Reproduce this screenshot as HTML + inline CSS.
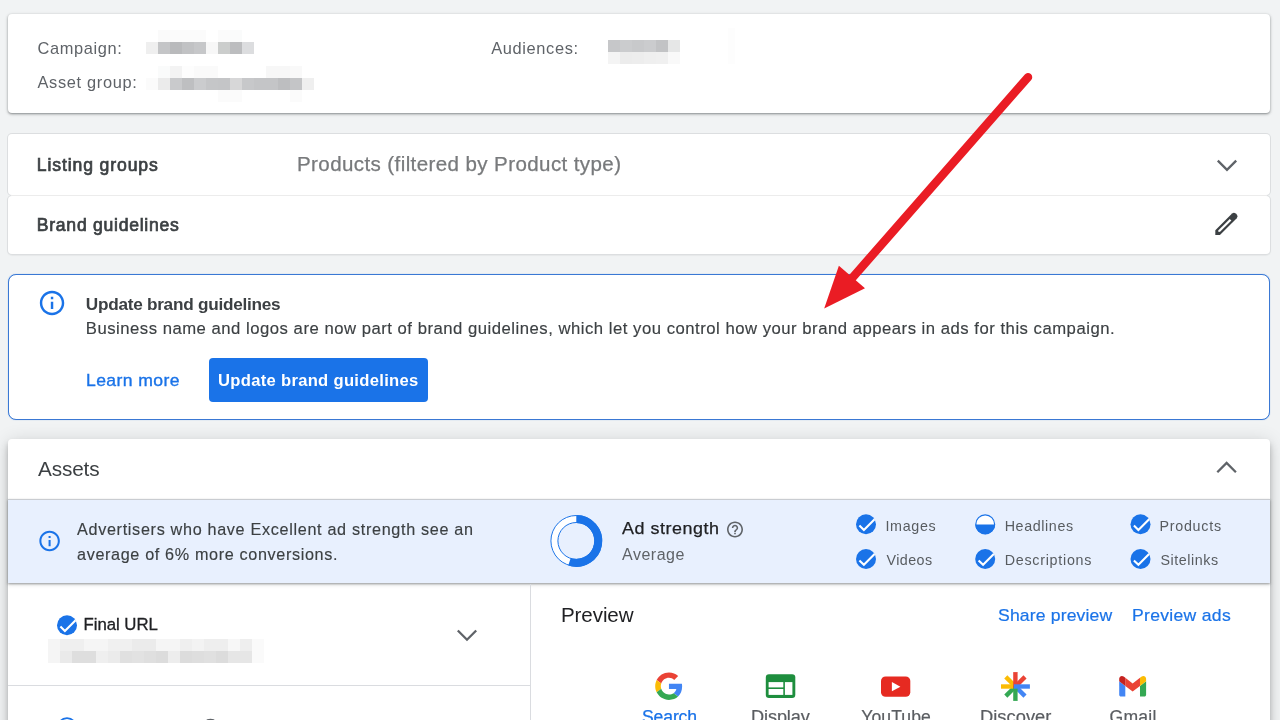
<!DOCTYPE html>
<html lang="en">
<head>
<meta charset="utf-8">
<title>Asset group</title>
<style>
*{box-sizing:border-box;margin:0;padding:0}
html,body{width:1280px;height:720px;overflow:hidden;background:#f1f3f4;font-family:"Liberation Sans",sans-serif;color:#3c4043}
.abs{position:absolute}
.t{position:absolute;white-space:nowrap;line-height:1}
.card{position:absolute;background:#fff}
#c1{left:8px;top:14px;width:1262px;height:99px;border-radius:4px;box-shadow:0 1px 2px rgba(60,64,67,.45),0 1px 3px 1px rgba(60,64,67,.15)}
#c2{left:8px;top:134px;width:1262px;height:61px;box-shadow:0 0 0 1px #dcdee0;border-radius:4px}
#c3{left:8px;top:196px;width:1262px;height:58px;box-shadow:0 0 0 1px #dcdee0,0 1px 1px 1px rgba(60,64,67,.06);border-radius:4px}
#info{left:8px;top:274px;width:1262px;height:146px;border:1px solid #3a78d4;border-radius:8px;box-shadow:0 0 1px rgba(26,115,232,.55)}
#c4{left:8px;top:439px;width:1262px;height:300px;border-radius:4px 4px 0 0;box-shadow:0 3px 5px -1px rgba(0,0,0,.2),0 6px 10px 0 rgba(0,0,0,.14),0 1px 18px 0 rgba(0,0,0,.12)}
#strip{left:8px;top:499px;width:1262px;height:84px;background:#e8f0fe;border-top:1px solid #c9ccd1;box-shadow:0 1px 2px rgba(60,64,67,.45),0 2px 4px rgba(60,64,67,.15)}
#btn{left:209px;top:358px;width:219px;height:44px;background:#1a73e8;border-radius:4px}
svg{position:absolute;left:0;top:0;overflow:visible}
</style>
</head>
<body>
<div class="card" id="c1"></div>
<div class="card" id="c2"></div>
<div class="card" id="c3"></div>
<div class="abs" style="left:11px;top:195px;width:1256px;height:1px;background:#ececec"></div>
<div class="card" id="info"></div>
<div class="abs" id="btn"></div>
<div class="card" id="c4"></div>
<div class="abs" id="strip"></div>
<div class="abs" style="left:530px;top:584px;width:1px;height:140px;background:#dadce0"></div>
<div class="abs" style="left:8px;top:685px;width:522px;height:1px;background:#dadce0"></div>

<div id="tx" style="position:absolute;left:0;top:0;width:1280px;height:720px;will-change:transform"><div class="t" style="left:37.50px;top:39.76px;font-size:16.4px;color:#5f6368;letter-spacing:0.630px">Campaign:</div>
<div class="t" style="left:37.50px;top:73.51px;font-size:16.4px;color:#5f6368;letter-spacing:0.662px">Asset group:</div>
<div class="t" style="left:491.25px;top:39.76px;font-size:16.4px;color:#5f6368;letter-spacing:0.634px">Audiences:</div>
<div class="t" style="left:36.80px;top:156.81px;font-size:17.6px;color:#3c4043;letter-spacing:0.881px;-webkit-text-stroke:0.7px #3c4043">Listing groups</div>
<div class="t" style="left:297.24px;top:154.81px;font-size:19.4px;color:#787a7c;letter-spacing:0.369px;-webkit-text-stroke:0.25px #787a7c;transform:scaleX(1.06);transform-origin:0 0">Products (filtered by Product type)</div>
<div class="t" style="left:36.80px;top:216.81px;font-size:17.6px;color:#3c4043;letter-spacing:0.729px;-webkit-text-stroke:0.7px #3c4043">Brand guidelines</div>
<div class="t" style="left:85.75px;top:296.00px;font-size:17.2px;color:#3c4043;letter-spacing:-0.261px;font-weight:700">Update brand guidelines</div>
<div class="t" style="left:85.75px;top:321.11px;font-size:16.7px;color:#3c4043;letter-spacing:0.505px;-webkit-text-stroke:0.15px #3c4043">Business name and logos are now part of brand guidelines, which let you control how your brand appears in ads for this campaign.</div>
<div class="t" style="left:85.69px;top:372.51px;font-size:16.6px;color:#1a73e8;letter-spacing:0.378px;-webkit-text-stroke:0.35px #1a73e8;transform:scaleX(1.06);transform-origin:0 0">Learn more</div>
<div class="t" style="left:218.00px;top:373.26px;font-size:16.6px;color:#ffffff;letter-spacing:0.301px;font-weight:700">Update brand guidelines</div>
<div class="t" style="left:37.50px;top:459.51px;font-size:19.8px;color:#3c4043;letter-spacing:-0.133px;transform:scaleX(1.05);transform-origin:0 0">Assets</div>
<div class="t" style="left:77.00px;top:520.51px;font-size:16.2px;color:#3c4043;letter-spacing:0.677px;-webkit-text-stroke:0.15px #3c4043">Advertisers who have Excellent ad strength see an</div>
<div class="t" style="left:77.00px;top:545.51px;font-size:16.2px;color:#3c4043;letter-spacing:0.645px;-webkit-text-stroke:0.15px #3c4043">average of 6% more conversions.</div>
<div class="t" style="left:622.00px;top:521.26px;font-size:16.6px;color:#202124;letter-spacing:0.495px;-webkit-text-stroke:0.25px #202124;transform:scaleX(1.08);transform-origin:0 0">Ad strength</div>
<div class="t" style="left:622.00px;top:546.51px;font-size:16px;color:#5f6368;letter-spacing:0.516px">Average</div>
<div class="t" style="left:885.40px;top:519.01px;font-size:14.3px;color:#585c60;letter-spacing:0.693px">Images</div>
<div class="t" style="left:886.40px;top:552.51px;font-size:14.3px;color:#585c60;letter-spacing:0.458px">Videos</div>
<div class="t" style="left:1004.70px;top:519.01px;font-size:14.3px;color:#585c60;letter-spacing:0.608px">Headlines</div>
<div class="t" style="left:1004.70px;top:552.51px;font-size:14.3px;color:#585c60;letter-spacing:0.735px">Descriptions</div>
<div class="t" style="left:1159.40px;top:519.01px;font-size:14.3px;color:#585c60;letter-spacing:0.747px">Products</div>
<div class="t" style="left:1160.40px;top:552.51px;font-size:14.3px;color:#585c60;letter-spacing:0.564px">Sitelinks</div>
<div class="t" style="left:83.50px;top:617.11px;font-size:16.8px;color:#202124;letter-spacing:-0.034px;-webkit-text-stroke:0.3px #202124">Final URL</div>
<div class="t" style="left:560.96px;top:606.31px;font-size:19.8px;color:#202124;letter-spacing:-0.100px;transform:scaleX(1.04);transform-origin:0 0">Preview</div>
<div class="t" style="left:997.60px;top:607.91px;font-size:16.6px;color:#1a73e8;letter-spacing:0.141px;-webkit-text-stroke:0.2px #1a73e8;transform:scaleX(1.06);transform-origin:0 0">Share preview</div>
<div class="t" style="left:1132.44px;top:607.91px;font-size:16.6px;color:#1a73e8;letter-spacing:0.271px;-webkit-text-stroke:0.2px #1a73e8;transform:scaleX(1.06);transform-origin:0 0">Preview ads</div>
<div class="t" style="left:642.00px;top:708.61px;font-size:17.6px;color:#1a73e8;letter-spacing:-0.142px;-webkit-text-stroke:0.25px #1a73e8">Search</div>
<div class="t" style="left:750.97px;top:708.61px;font-size:17.6px;color:#5a5d61;letter-spacing:-0.096px;-webkit-text-stroke:0.2px #5a5d61;transform:scaleX(1.03);transform-origin:0 0">Display</div>
<div class="t" style="left:861.25px;top:708.61px;font-size:17.6px;color:#5a5d61;letter-spacing:0.066px;-webkit-text-stroke:0.2px #5a5d61">YouTube</div>
<div class="t" style="left:979.71px;top:708.61px;font-size:17.6px;color:#5a5d61;letter-spacing:0.031px;-webkit-text-stroke:0.2px #5a5d61;transform:scaleX(1.04);transform-origin:0 0">Discover</div>
<div class="t" style="left:1109.50px;top:708.61px;font-size:17.6px;color:#5a5d61;letter-spacing:0.241px;-webkit-text-stroke:0.2px #5a5d61">Gmail</div></div>

<svg width="1280" height="720" viewBox="0 0 1280 720">
<!-- blurred (pixelated) values -->
<g shape-rendering="crispEdges">
<rect x="158" y="30" width="12" height="12" fill="#fafafa"/>
<rect x="170" y="30" width="12" height="12" fill="#fbfbfb"/>
<rect x="182" y="30" width="12" height="12" fill="#fbfbfb"/>
<rect x="194" y="30" width="12" height="12" fill="#fbfbfb"/>
<rect x="218" y="30" width="12" height="12" fill="#fbfbfb"/>
<rect x="230" y="30" width="12" height="12" fill="#fafbfb"/>
<rect x="146" y="42" width="12" height="12" fill="#efefef"/>
<rect x="158" y="42" width="12" height="12" fill="#c4c5c7"/>
<rect x="170" y="42" width="12" height="12" fill="#b9babc"/>
<rect x="182" y="42" width="12" height="12" fill="#c1c2c4"/>
<rect x="194" y="42" width="12" height="12" fill="#c6c7c9"/>
<rect x="206" y="42" width="12" height="12" fill="#f7f7f7"/>
<rect x="218" y="42" width="12" height="12" fill="#cbcdcc"/>
<rect x="230" y="42" width="12" height="12" fill="#bcbdbf"/>
<rect x="242" y="42" width="12" height="12" fill="#dcdddf"/>
<rect x="158" y="66" width="12" height="12" fill="#fafbfb"/>
<rect x="170" y="66" width="12" height="12" fill="#f3f3f3"/>
<rect x="182" y="66" width="12" height="12" fill="#fdfdfd"/>
<rect x="194" y="66" width="12" height="12" fill="#fafafa"/>
<rect x="206" y="66" width="12" height="12" fill="#fafafa"/>
<rect x="266" y="66" width="12" height="12" fill="#f7f7f7"/>
<rect x="278" y="66" width="12" height="12" fill="#f7f7f7"/>
<rect x="290" y="66" width="12" height="12" fill="#f9f9f9"/>
<rect x="146" y="78" width="12" height="12" fill="#fbfbfb"/>
<rect x="158" y="78" width="12" height="12" fill="#ebebeb"/>
<rect x="170" y="78" width="12" height="12" fill="#c9cacc"/>
<rect x="182" y="78" width="12" height="12" fill="#bebfc1"/>
<rect x="194" y="78" width="12" height="12" fill="#cbccce"/>
<rect x="206" y="78" width="12" height="12" fill="#c5c6c8"/>
<rect x="218" y="78" width="12" height="12" fill="#c4c5c7"/>
<rect x="230" y="78" width="12" height="12" fill="#d7d7d8"/>
<rect x="242" y="78" width="12" height="12" fill="#c7c8ca"/>
<rect x="254" y="78" width="12" height="12" fill="#c4c5c7"/>
<rect x="266" y="78" width="12" height="12" fill="#c4c5c7"/>
<rect x="278" y="78" width="12" height="12" fill="#bdbec0"/>
<rect x="290" y="78" width="12" height="12" fill="#c4c5c7"/>
<rect x="302" y="78" width="12" height="12" fill="#efefef"/>
<rect x="218" y="90" width="12" height="12" fill="#fbfbfb"/>
<rect x="230" y="90" width="12" height="12" fill="#fbfbfb"/>
<rect x="290" y="90" width="12" height="12" fill="#fbfbfb"/>
<rect x="608" y="40" width="12" height="12" fill="#c6c7c9"/>
<rect x="620" y="40" width="12" height="12" fill="#cbccce"/>
<rect x="632" y="40" width="12" height="12" fill="#c8c9cb"/>
<rect x="644" y="40" width="12" height="12" fill="#cbccce"/>
<rect x="656" y="40" width="12" height="12" fill="#c2c3c5"/>
<rect x="668" y="40" width="12" height="12" fill="#e6e7e7"/>
<rect x="608" y="52" width="12" height="12" fill="#f4f4f4"/>
<rect x="620" y="52" width="12" height="12" fill="#ececec"/>
<rect x="632" y="52" width="12" height="12" fill="#ededed"/>
<rect x="644" y="52" width="12" height="12" fill="#efefef"/>
<rect x="656" y="52" width="12" height="12" fill="#f0f0f0"/>
<rect x="668" y="52" width="12" height="12" fill="#f9f9f9"/>
<rect x="48" y="639" width="12" height="12" fill="#f5f5f5"/>
<rect x="60" y="639" width="12" height="12" fill="#efefef"/>
<rect x="72" y="639" width="12" height="12" fill="#efefef"/>
<rect x="84" y="639" width="12" height="12" fill="#f5f5f5"/>
<rect x="96" y="639" width="12" height="12" fill="#f5f5f5"/>
<rect x="108" y="639" width="12" height="12" fill="#f0f0f0"/>
<rect x="120" y="639" width="12" height="12" fill="#f0f0f0"/>
<rect x="132" y="639" width="12" height="12" fill="#ebebeb"/>
<rect x="144" y="639" width="12" height="12" fill="#ebebeb"/>
<rect x="156" y="639" width="12" height="12" fill="#f5f5f5"/>
<rect x="168" y="639" width="12" height="12" fill="#f5f5f5"/>
<rect x="180" y="639" width="12" height="12" fill="#efefef"/>
<rect x="192" y="639" width="12" height="12" fill="#f3f3f3"/>
<rect x="204" y="639" width="12" height="12" fill="#eeeeee"/>
<rect x="216" y="639" width="12" height="12" fill="#eeeeee"/>
<rect x="228" y="639" width="12" height="12" fill="#f7f7f7"/>
<rect x="240" y="639" width="12" height="12" fill="#eeeeee"/>
<rect x="252" y="639" width="12" height="12" fill="#fafafa"/>
<rect x="48" y="651" width="12" height="12" fill="#f5f5f5"/>
<rect x="60" y="651" width="12" height="12" fill="#eaeaea"/>
<rect x="72" y="651" width="12" height="12" fill="#dedede"/>
<rect x="84" y="651" width="12" height="12" fill="#dedede"/>
<rect x="96" y="651" width="12" height="12" fill="#efefef"/>
<rect x="108" y="651" width="12" height="12" fill="#ebebeb"/>
<rect x="120" y="651" width="12" height="12" fill="#e0e0e0"/>
<rect x="132" y="651" width="12" height="12" fill="#e2e2e2"/>
<rect x="144" y="651" width="12" height="12" fill="#dfdfdf"/>
<rect x="156" y="651" width="12" height="12" fill="#dcdcdc"/>
<rect x="168" y="651" width="12" height="12" fill="#ededed"/>
<rect x="180" y="651" width="12" height="12" fill="#dcdcdc"/>
<rect x="192" y="651" width="12" height="12" fill="#dedede"/>
<rect x="204" y="651" width="12" height="12" fill="#e0e0e0"/>
<rect x="216" y="651" width="12" height="12" fill="#dcdcdc"/>
<rect x="228" y="651" width="12" height="12" fill="#e6e6e6"/>
<rect x="240" y="651" width="12" height="12" fill="#e6e6e6"/>
<rect x="252" y="651" width="12" height="12" fill="#fafafa"/>
</g>

<rect x="728" y="28" width="7" height="36" fill="#fdfdfd"/>
<!-- chevrons -->
<g fill="none" stroke="#5f6368" stroke-width="2.3">
<path d="M1217.8 160.6 L1227 169.8 L1236.2 160.6"/>
<path d="M1217.3 472.2 L1226.6 462.9 L1235.9 472.2"/>
<path d="M457.8 630.5 L467 639.7 L476.2 630.5"/>
</g>

<!-- pencil -->
<g transform="translate(1215.3 235) rotate(-45)">
<path d="M0 0 L3.3 -3.3 L27 -3.3 A2.6 2.6 0 0 1 29.6 -0.7 L29.6 0.7 A2.6 2.6 0 0 1 27 3.3 L3.3 3.3 Z" fill="#3c4043"/>
<path d="M4.4 0 L5.6 -1.15 L21.6 -1.15 L21.6 1.15 L5.6 1.15 Z" fill="#fff"/>
</g>

<!-- info icons -->
<g fill="#1a73e8">
<g transform="translate(37.4 288.3) scale(1.22)"><path d="M11 7h2v2h-2zm0 4h2v6h-2zm1-9C6.48 2 2 6.480 2 12s4.480 10 10 10 10-4.480 10-10S17.520 2 12 2zm0 18c-4.410 0-8-3.590-8-8s3.590-8 8-8 8 3.590 8 8-3.590 8-8 8z"/></g>
<g transform="translate(37.3 528.7) scale(1.025)"><path d="M11 7h2v2h-2zm0 4h2v6h-2zm1-9C6.48 2 2 6.480 2 12s4.480 10 10 10 10-4.480 10-10S17.520 2 12 2zm0 18c-4.410 0-8-3.590-8-8s3.590-8 8-8 8 3.590 8 8-3.590 8-8 8z"/></g>
</g>

<!-- help icon -->
<g transform="translate(725.4 519.9) scale(0.8)" fill="#5f6368"><path d="M11 18h2v-2h-2v2zm1-16C6.48 2 2 6.480 2 12s4.480 10 10 10 10-4.480 10-10S17.520 2 12 2zm0 18c-4.410 0-8-3.590-8-8s3.590-8 8-8 8 3.590 8 8-3.590 8-8 8zm0-14c-2.210 0-4 1.790-4 4h2c0-1.100.9-2 2-2s2 .9 2 2c0 2-3 1.750-3 5h2c0-2.250 3-2.500 3-5 0-2.210-1.790-4-4-4z"/></g>

<!-- donut -->
<g transform="translate(576.3 540.9)" fill="none">
<circle r="22" stroke="#fff" stroke-width="7.5"/>
<circle r="25.4" stroke="#1a73e8" stroke-width="1"/>
<circle r="18.4" stroke="#1a73e8" stroke-width="1"/>
<path d="M0 -22 A22 22 0 1 1 -6.8 20.92" stroke="#1a73e8" stroke-width="8"/>
</g>

<!-- check circles -->
<defs>
<g id="ck"><circle r="10" fill="#1a73e8"/><path d="M-6.6 1.4 L-2.1 5.8 L8.6 -4.9" fill="none" stroke="#fff" stroke-width="2.1"/></g>
</defs>
<use href="#ck" x="866" y="524.2"/>
<use href="#ck" x="866" y="559"/>
<use href="#ck" x="985.2" y="559"/>
<use href="#ck" x="1140.5" y="524.2"/>
<use href="#ck" x="1140.5" y="559"/>
<use href="#ck" x="67" y="625.2"/>
<!-- half circle (Headlines) -->
<g transform="translate(985.2 524.2)"><circle r="9.4" fill="#fff" stroke="#1a73e8" stroke-width="1.2"/><path d="M-10 0.3 A10 10 0 0 0 10 0.3 Z" fill="#1a73e8"/></g>
<!-- next row peeking -->
<circle cx="210.5" cy="727.2" r="7.6" fill="none" stroke="#5f6368" stroke-width="1.5"/>
<circle cx="67" cy="727.5" r="9.4" fill="none" stroke="#1a73e8" stroke-width="1.6"/>

<!-- Google G -->
<g transform="translate(655.2 672.4) scale(0.573)">
<path fill="#EA4335" d="M24 9.5c3.540 0 6.710 1.220 9.210 3.600l6.850-6.850C35.900 2.380 30.470 0 24 0 14.620 0 6.510 5.380 2.560 13.220l7.980 6.190C12.430 13.720 17.740 9.500 24 9.500z"/>
<path fill="#4285F4" d="M46.980 24.550c0-1.570-.150-3.090-.380-4.550H24v9.020h12.940c-.580 2.960-2.260 5.480-4.780 7.180l7.730 6c4.510-4.180 7.090-10.360 7.090-17.650z"/>
<path fill="#FBBC05" d="M10.530 28.590c-.480-1.450-.760-2.990-.760-4.590s.270-3.140.760-4.590l-7.980-6.190C.920 16.460 0 20.120 0 24c0 3.880.920 7.540 2.560 10.780l7.970-6.190z"/>
<path fill="#34A853" d="M24 48c6.480 0 11.930-2.130 15.890-5.810l-7.730-6c-2.150 1.450-4.920 2.300-8.160 2.300-6.260 0-11.570-4.220-13.470-9.910l-7.980 6.190C6.510 42.620 14.620 48 24 48z"/>
</g>

<!-- Display icon -->
<rect x="765.8" y="674.3" width="29.5" height="23.7" rx="3.2" fill="#1e8e3e"/>
<rect x="768.6" y="682.1" width="14.7" height="5.3" fill="#fff"/>
<rect x="768.6" y="689" width="14.7" height="5.9" fill="#fff"/>
<rect x="784.9" y="682.1" width="7.5" height="12.8" fill="#fff"/>

<!-- YouTube icon -->
<rect x="881" y="676.5" width="29.3" height="20.3" rx="4.6" fill="#e62a21"/>
<path d="M891.9 682.1 L900.4 686.65 L891.9 691.2 Z" fill="#fff"/>

<!-- Discover icon -->
<g transform="translate(1015.4 686.5)" stroke-width="4.4" fill="none">
<path d="M0 0 L-9.6 -9.6" stroke="#fbbc04"/>
<path d="M0 0 L9.6 -9.6" stroke="#ea4335"/>
<path d="M0 0 L-9.6 9.6" stroke="#34a853"/>
<path d="M0 0 L9.6 9.6" stroke="#4285f4"/>
<path d="M1 0 H-14.4" stroke="#fbbc04"/>
<path d="M0 -1 V14.4" stroke="#34a853"/>
<path d="M0 1.5 V-14.4" stroke="#ea4335"/>
<path d="M-1.5 0 H14.5" stroke="#4285f4"/>
</g>

<!-- Gmail icon -->
<g transform="translate(1119.2 675.9) scale(0.3057 0.3121) translate(-52 -42)">
<path fill="#4285f4" d="M58 108h14V74L52 59v43c0 3.320 2.690 6 6 6"/>
<path fill="#34a853" d="M120 108h14c3.320 0 6-2.690 6-6V59l-20 15"/>
<path fill="#fbbc04" d="M120 48v26l20-15v-8c0-7.420-8.470-11.650-14.400-7.200"/>
<path fill="#ea4335" d="M72 74V48l24 18 24-18v26L96 92"/>
<path fill="#c5221f" d="M52 51v8l20 15V48l-5.600-4.200c-5.940-4.450-14.400-.220-14.400 7.200"/>
</g>

<!-- red annotation arrow -->
<g>
<line x1="1028" y1="77.2" x2="850" y2="280.5" stroke="#ea1c24" stroke-width="8.5" stroke-linecap="round"/>
<path d="M824.2 308.6 L838.9 265.8 L865 288.3 Z" fill="#ea1c24"/>
</g>
</svg>
</body>
</html>
